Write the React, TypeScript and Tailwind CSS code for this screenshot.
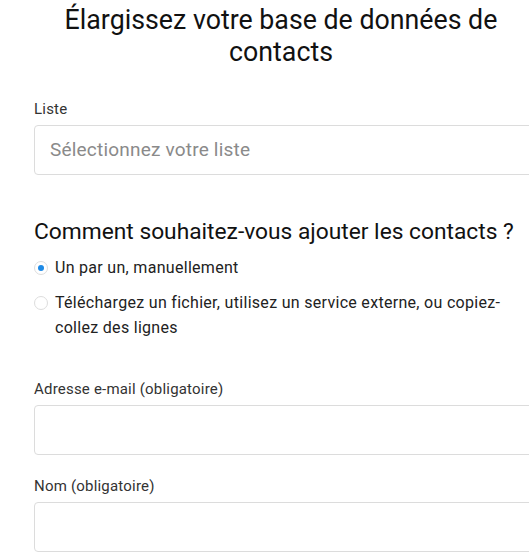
const inputBox = "h-[50px] w-[520px] rounded border border-[#dcdcdc] bg-white";

export default function App() {
    return (
        <div className="h-[558px] w-[529px] overflow-hidden bg-white font-['Roboto',sans-serif] text-[#1f1f1f]">
            <div className="pl-[34px]">
                {/* Title */}
                <h1 className="w-[494px] pt-[4px] text-center text-[26.75px] leading-[32px] font-normal text-[#111]">
                    Élargissez votre base de données de contacts
                </h1>

                {/* List select */}
                <div className="mt-[31px] text-[15px] leading-[20px] tracking-[0.2px] text-[#333]">Liste</div>
                <div className={`mt-[6px] flex items-center justify-between pl-[15px] ${inputBox}`}>
                    <span className="text-[19px] tracking-[0.2px] text-[#8a8a8a]">Sélectionnez votre liste</span>
                    <svg width="8" height="4" viewBox="0 0 8 4" className="mr-[11px] text-[#777]">
                        <path d="M0 0 L8 0 L4 4 Z" fill="currentColor" />
                    </svg>
                </div>

                {/* How to add */}
                <h2 className="mt-[42px] text-[22.75px] leading-[30px] font-normal text-[#111]">
                    Comment souhaitez-vous ajouter les contacts ?
                </h2>
                <div className="mt-[8px] flex flex-col gap-[10px] text-[16px] leading-[25px] tracking-[0.3px] text-[#222]">
                    <label className="flex items-start gap-[7px]">
                        <span className="mt-[6px] flex h-[14px] w-[14px] shrink-0 items-center justify-center rounded-full border border-[#ddd] bg-white">
                            <span className="h-[6px] w-[6px] rounded-full bg-[#1e8ae6]" />
                        </span>
                        <span>Un par un, manuellement</span>
                    </label>
                    <label className="flex items-start gap-[7px]">
                        <span className="mt-[6px] h-[14px] w-[14px] shrink-0 rounded-full border border-[#ddd] bg-white" />
                        <span className="w-[460px]">
                            Téléchargez un fichier, utilisez un service externe, ou copiez-collez des lignes
                        </span>
                    </label>
                </div>

                {/* Email */}
                <div className="mt-[39px] text-[15px] leading-[20px] tracking-[0.2px] text-[#333]">Adresse e-mail (obligatoire)</div>
                <div className={`mt-[6px] ${inputBox}`} />

                {/* Name */}
                <div className="mt-[21px] text-[15px] leading-[20px] tracking-[0.2px] text-[#333]">Nom (obligatoire)</div>
                <div className={`mt-[6px] ${inputBox}`} />
            </div>
        </div>
    );
}
